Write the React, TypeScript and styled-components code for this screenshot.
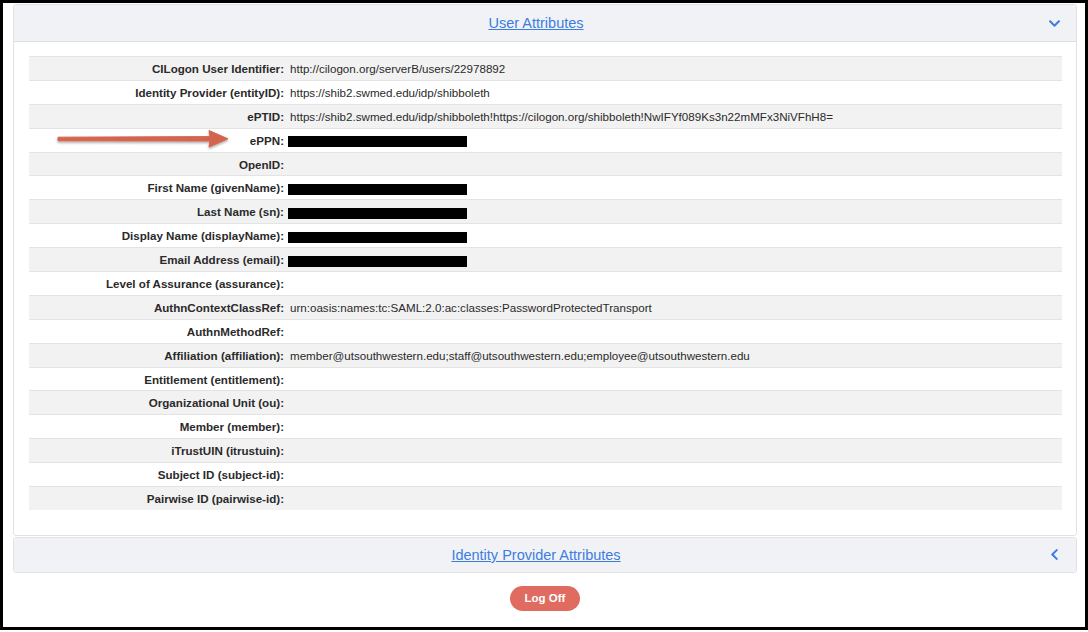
import React from 'react';
import styled, { createGlobalStyle } from 'styled-components';
import { FaChevronDown, FaChevronLeft } from 'react-icons/fa';

const GlobalStyle = createGlobalStyle`
  html, body {
    margin: 0;
    padding: 0;
    background: #fff;
  }
  body {
    font-family: "Liberation Sans", Arial, Helvetica, sans-serif;
    color: #222;
  }
`;

type Attr = { label: string; value?: string; redacted?: boolean; pointed?: boolean };

const attributes: Attr[] = [
  { label: 'CILogon User Identifier:', value: 'http://cilogon.org/serverB/users/22978892' },
  { label: 'Identity Provider (entityID):', value: 'https://shib2.swmed.edu/idp/shibboleth' },
  {
    label: 'ePTID:',
    value: 'https://shib2.swmed.edu/idp/shibboleth!https://cilogon.org/shibboleth!NwIFYf089Ks3n22mMFx3NiVFhH8=',
  },
  { label: 'ePPN:', redacted: true, pointed: true },
  { label: 'OpenID:' },
  { label: 'First Name (givenName):', redacted: true },
  { label: 'Last Name (sn):', redacted: true },
  { label: 'Display Name (displayName):', redacted: true },
  { label: 'Email Address (email):', redacted: true },
  { label: 'Level of Assurance (assurance):' },
  { label: 'AuthnContextClassRef:', value: 'urn:oasis:names:tc:SAML:2.0:ac:classes:PasswordProtectedTransport' },
  { label: 'AuthnMethodRef:' },
  {
    label: 'Affiliation (affiliation):',
    value: 'member@utsouthwestern.edu;staff@utsouthwestern.edu;employee@utsouthwestern.edu',
  },
  { label: 'Entitlement (entitlement):' },
  { label: 'Organizational Unit (ou):' },
  { label: 'Member (member):' },
  { label: 'iTrustUIN (itrustuin):' },
  { label: 'Subject ID (subject-id):' },
  { label: 'Pairwise ID (pairwise-id):' },
];

const Arrow = () => (
  <ArrowWrap>
    <svg width="180" height="24" viewBox="0 0 180 24">
      <defs>
        <filter id="shadow" x="-10%" y="-50%" width="120%" height="200%">
          <feDropShadow dx="0" dy="1.5" stdDeviation="1.2" floodColor="#000" floodOpacity="0.35" />
        </filter>
      </defs>
      <path
        d="M3 10.2 L155 9.6 L154 3.5 L173 11.8 L154 20 L155 14 L3 13.8 Z"
        fill="#d3654f"
        stroke="#d3654f"
        strokeWidth="1"
        strokeLinejoin="round"
        filter="url(#shadow)"
      />
    </svg>
  </ArrowWrap>
);

const App = () => {
  return (
    <>
      <GlobalStyle />
      <Frame>
        <Card>
          <CardHeader>
            <HeaderTitle>
              <HeaderLink href="#">User Attributes</HeaderLink>
            </HeaderTitle>
            <Toggle>
              <FaChevronDown />
            </Toggle>
          </CardHeader>
          <CardBody>
            <Table>
              {attributes.map((attr, i) => (
                <Row key={attr.label} striped={i % 2 === 0}>
                  {attr.pointed && <Arrow />}
                  <Label>{attr.label}</Label>
                  <Value>{attr.redacted ? <Redacted /> : attr.value}</Value>
                </Row>
              ))}
            </Table>
          </CardBody>
        </Card>
        <Card collapsed>
          <CardHeader collapsed>
            <HeaderTitle>
              <HeaderLink href="#">Identity Provider Attributes</HeaderLink>
            </HeaderTitle>
            <Toggle>
              <FaChevronLeft />
            </Toggle>
          </CardHeader>
        </Card>
        <Footer>
          <LogOffButton>Log Off</LogOffButton>
        </Footer>
      </Frame>
    </>
  );
};

export default App;

const Frame = styled.div`
  box-sizing: border-box;
  width: 1088px;
  height: 630px;
  border: 3px solid #000;
  padding: 1px 8px 0 10px;
  display: flex;
  flex-direction: column;
`;

const Card = styled.div<{ collapsed?: boolean }>`
  border: 1px solid #e2e2e6;
  border-radius: 3px;
  background: #fff;
  margin-top: ${(p) => (p.collapsed ? '1px' : '0')};
  overflow: hidden;
`;

const CardHeader = styled.div<{ collapsed?: boolean }>`
  box-sizing: border-box;
  height: ${(p) => (p.collapsed ? '34px' : '37px')};
  padding: 0 15px;
  background: #f1f2f6;
  border-bottom: ${(p) => (p.collapsed ? 'none' : '1px solid #dedfe4')};
  display: flex;
  align-items: center;
`;

const HeaderTitle = styled.div`
  flex: 1;
  text-align: center;
`;

const HeaderLink = styled.a`
  font-size: 14.5px;
  color: #3c7ddf;
  text-decoration: underline;
`;

const Toggle = styled.span`
  width: 18px;
  display: flex;
  justify-content: flex-end;
  color: #3c7ddf;
  font-size: 13px;
`;

const CardBody = styled.div`
  padding: 14px 14px 25px 15px;
`;

const Table = styled.div`
  display: flex;
  flex-direction: column;
`;

const Row = styled.div<{ striped: boolean }>`
  position: relative;
  box-sizing: border-box;
  height: 23.9px;
  border-top: 1px solid #e3e3e3;
  background: ${(p) => (p.striped ? '#f2f2f2' : '#fff')};
  display: grid;
  grid-template-columns: 255px 1fr;
  column-gap: 6px;
  align-items: center;
  font-size: 11.6px;
`;

const Label = styled.div`
  text-align: right;
  font-weight: bold;
  color: #2a2a2a;
`;

const Value = styled.div`
  color: #2a2a2a;
  display: flex;
  align-items: center;
  white-space: nowrap;
`;

const Redacted = styled.span`
  display: block;
  width: 179px;
  height: 11px;
  margin: 3px 0 0 -2px;
  background: #000;
`;

const ArrowWrap = styled.div`
  position: absolute;
  left: 26px;
  top: -2px;
  display: flex;
  pointer-events: none;
`;

const Footer = styled.div`
  display: flex;
  justify-content: center;
  padding-top: 13px;
`;

const LogOffButton = styled.button`
  width: 70px;
  height: 25px;
  border: none;
  border-radius: 13px;
  background: #e06b60;
  color: #fff;
  font-family: "Liberation Sans", Arial, sans-serif;
  font-weight: bold;
  font-size: 11.5px;
  padding: 0;
  cursor: pointer;
`;
